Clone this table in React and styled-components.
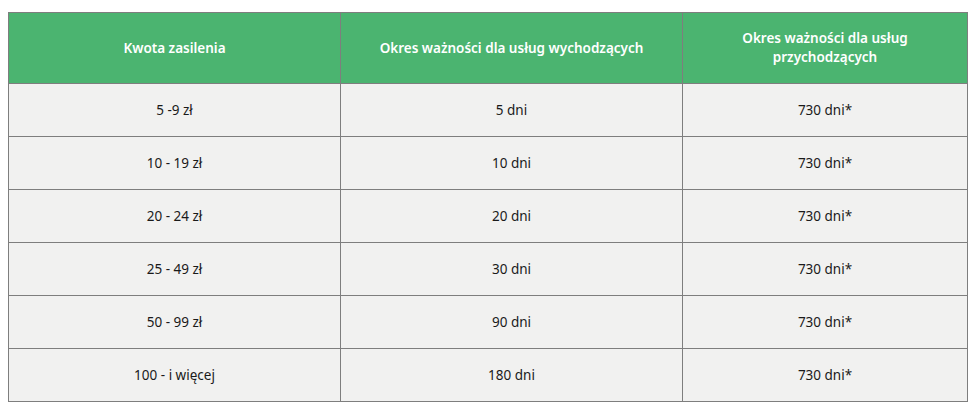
import React from 'react'
import styled, { createGlobalStyle } from 'styled-components'

const GlobalStyle = createGlobalStyle`
  body {
    margin: 0;
    background: #ffffff;
    font-family: "Noto Sans", "Open Sans", sans-serif;
  }
`

const Wrapper = styled.div`
  padding: 12px 7px 0 8px;
`

const Table = styled.table`
  width: 959px;
  border-collapse: collapse;
  table-layout: fixed;
  border: 1px solid #7e7e7e;
`

const HeadCell = styled.th`
  height: 70px;
  padding: 0 30px;
  background: #4bb470;
  color: #ffffff;
  font-size: 13.5px;
  font-weight: 600;
  line-height: 19px;
  text-align: center;
  border: 1px solid #7e7e7e;
`

const Cell = styled.td`
  height: 52px;
  padding: 0;
  background: #f1f1f0;
  color: #1a1a1a;
  font-size: 13.5px;
  text-align: center;
  border: 1px solid #7e7e7e;
`

const rows = [
  ['5 -9 zł', '5 dni', '730 dni*'],
  ['10 - 19 zł', '10 dni', '730 dni*'],
  ['20 - 24 zł', '20 dni', '730 dni*'],
  ['25 - 49 zł', '30 dni', '730 dni*'],
  ['50 - 99 zł', '90 dni', '730 dni*'],
  ['100 - i więcej', '180 dni', '730 dni*'],
]

export default function App() {
  return (
    <Wrapper>
      <GlobalStyle />
      <Table>
        <colgroup>
          <col style={{ width: 332 }} />
          <col style={{ width: 342 }} />
          <col style={{ width: 285 }} />
        </colgroup>
        <thead>
          <tr>
            <HeadCell>Kwota zasilenia</HeadCell>
            <HeadCell>Okres ważności dla usług wychodzących</HeadCell>
            <HeadCell>Okres ważności dla usług przychodzących</HeadCell>
          </tr>
        </thead>
        <tbody>
          {rows.map((r, i) => (
            <tr key={i}>
              {r.map((c, j) => (
                <Cell key={j}>{c}</Cell>
              ))}
            </tr>
          ))}
        </tbody>
      </Table>
    </Wrapper>
  )
}
